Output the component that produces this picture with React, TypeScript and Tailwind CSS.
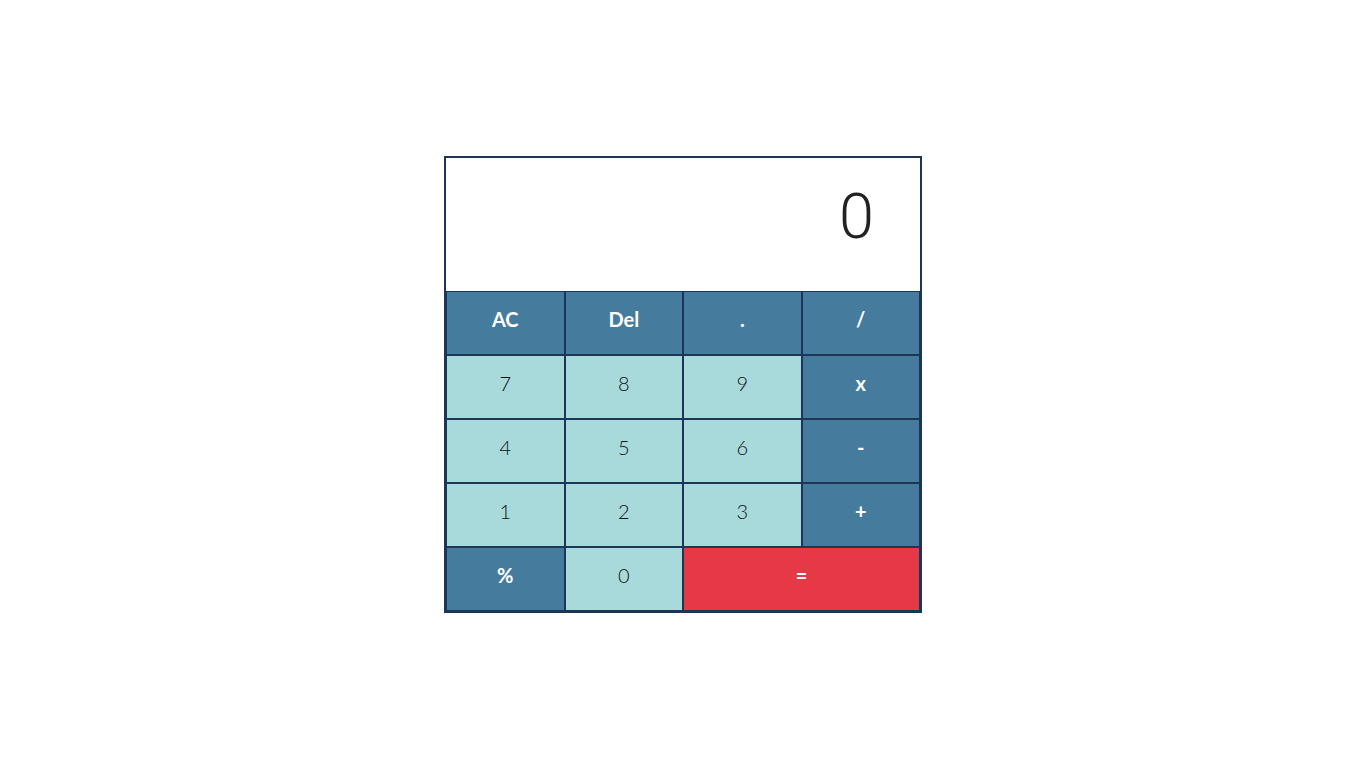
import { useState } from "react";

const keys = [
  { label: "AC", kind: "op" },
  { label: "Del", kind: "op" },
  { label: ".", kind: "op" },
  { label: "/", kind: "op" },
  { label: "7", kind: "num" },
  { label: "8", kind: "num" },
  { label: "9", kind: "num" },
  { label: "x", kind: "op" },
  { label: "4", kind: "num" },
  { label: "5", kind: "num" },
  { label: "6", kind: "num" },
  { label: "-", kind: "op" },
  { label: "1", kind: "num" },
  { label: "2", kind: "num" },
  { label: "3", kind: "num" },
  { label: "+", kind: "op" },
  { label: "%", kind: "op" },
  { label: "0", kind: "num" },
  { label: "=", kind: "eq" },
];

export default function App() {
  const [display] = useState("0");

  return (
    <div
      className="flex h-screen w-full items-center justify-center bg-white"
      style={{ fontFamily: "'Lato', 'Noto Sans', sans-serif" }}
    >
      <div className="w-[478px] border-2 border-[#1d3557]">
        <div
          className="flex h-[133px] items-center justify-end bg-white pb-[14px] pr-[46px] text-[63px] font-light text-[#222]"
          style={{ fontFamily: "Roboto, sans-serif" }}
        >
          {display}
        </div>
        <div className="grid grid-cols-4">
          {keys.map((k) => (
            <button
              key={k.label}
              className={`h-16 border border-[#1d3557] pb-[7px] text-xl ${
                k.kind === "num"
                  ? "bg-[#a8dadc] font-light text-[#111]"
                  : k.kind === "eq"
                  ? "col-span-2 bg-[#e63946] font-bold text-white"
                  : "bg-[#457b9d] font-bold text-white"
              }`}
            >
              {k.label}
            </button>
          ))}
        </div>
      </div>
    </div>
  );
}
